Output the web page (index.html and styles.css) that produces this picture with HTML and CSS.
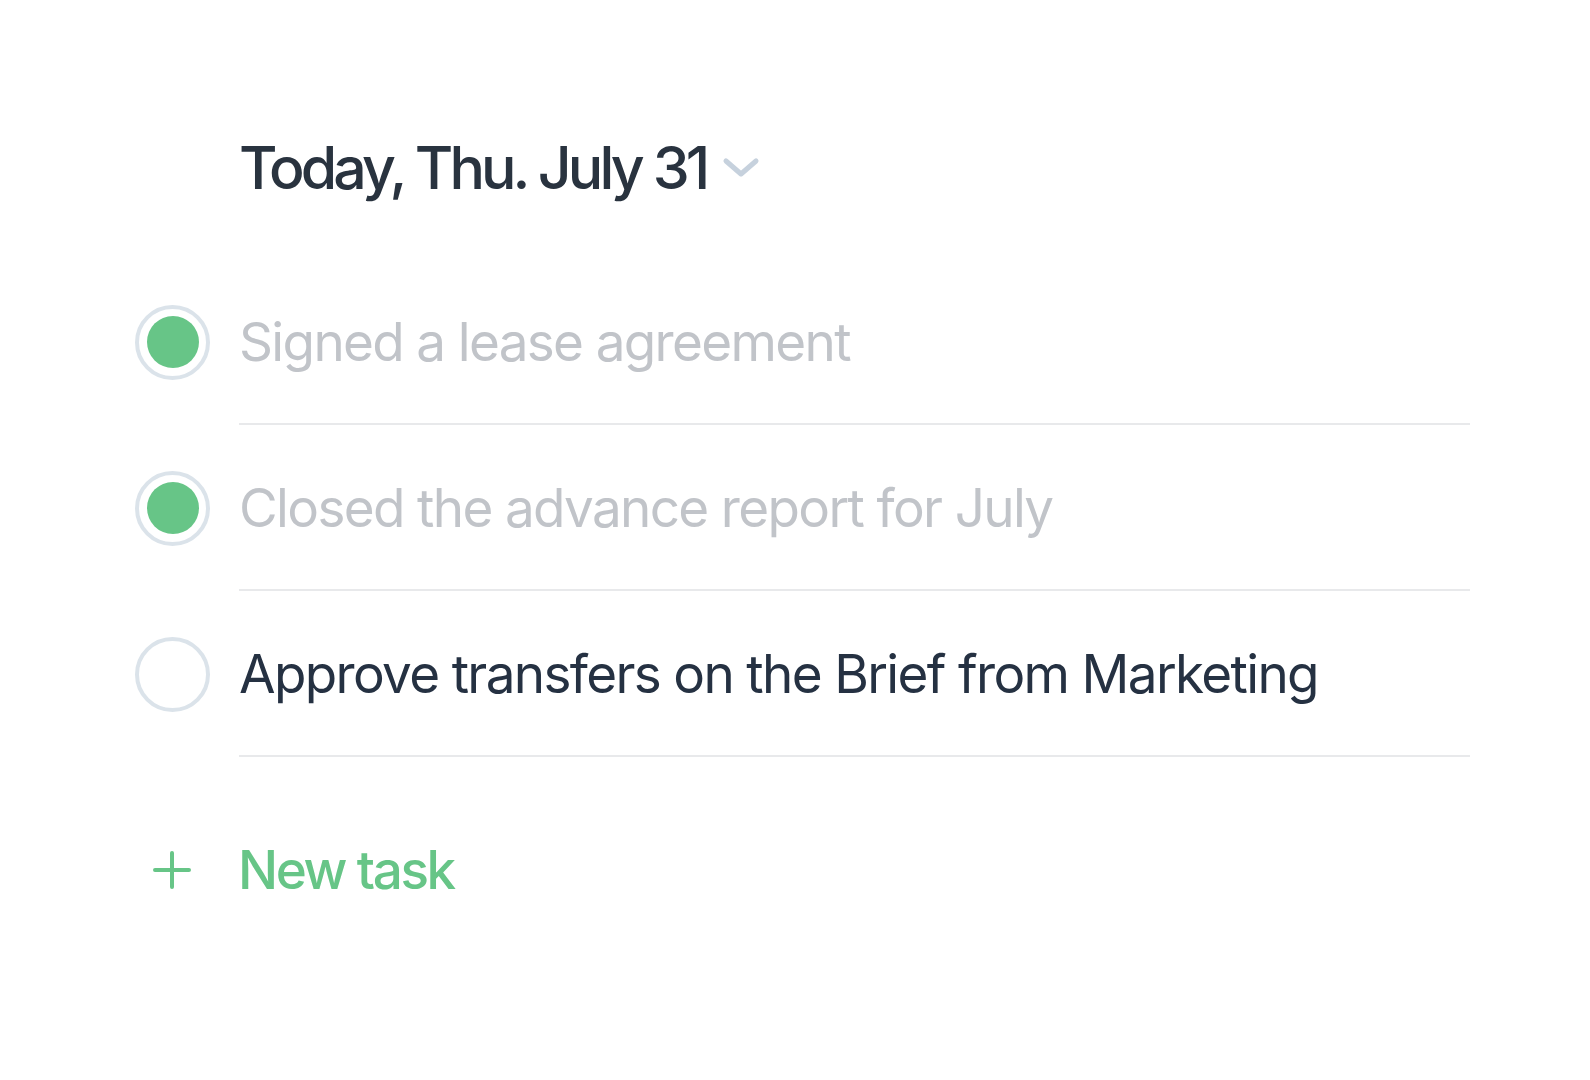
FILE: index.html
```html
<!DOCTYPE html>
<html lang="en">
<head>
<meta charset="utf-8">
<title>Today</title>
<link rel="stylesheet" href="styles.css">
</head>
<body>
<main class="page">
  <header class="header">
    <h1 class="title">Today, Thu. July 31</h1>
    <svg class="chevron" width="38" height="22" viewBox="0 0 38 22" aria-hidden="true">
      <path d="M4 4 L19 17 L34 4" fill="none" stroke="#c6d1dd" stroke-width="5" stroke-linecap="round" stroke-linejoin="round"/>
    </svg>
  </header>

  <ul class="tasks">
    <li class="task done">
      <span class="check"><span class="dot"></span></span>
      <span class="label">Signed a lease agreement</span>
    </li>
    <li class="task done">
      <span class="check"><span class="dot"></span></span>
      <span class="label">Closed the advance report for July</span>
    </li>
    <li class="task">
      <span class="check"></span>
      <span class="label">Approve transfers on the Brief from Marketing</span>
    </li>
  </ul>

  <div class="new-task">
    <svg class="plus" width="38" height="38" viewBox="0 0 38 38" aria-hidden="true">
      <path d="M19 2 V36 M2 19 H36" fill="none" stroke="#67c587" stroke-width="4" stroke-linecap="round"/>
    </svg>
    <span class="new-label">New task</span>
  </div>
</main>
</body>
</html>
```

FILE: styles.css
```css
* { box-sizing: border-box; }

html, body {
  margin: 0;
  padding: 0;
  background: #ffffff;
}

body {
  font-family: "Inter", "Noto Sans", "Liberation Sans", sans-serif;
  color: #263242;
}

.page {
  padding: 130px 0 0 135px;
}

.header {
  display: flex;
  align-items: center;
  margin-left: 104px;
  height: 76px;
}

.title {
  margin: 0;
  font-size: 59px;
  font-weight: 500;
  letter-spacing: -3.9px;
  color: #29333f;
  line-height: 76px;
}

.chevron {
  flex: none;
  margin-left: 16px;
}

.tasks {
  list-style: none;
  margin: 53px 0 0 0;
  padding: 0;
}

.task {
  display: flex;
  align-items: center;
}

.check {
  flex: none;
  width: 75px;
  height: 75px;
  border: 4px solid #dbe3ea;
  border-radius: 50%;
  display: flex;
  align-items: center;
  justify-content: center;
  margin-right: 29px;
}

.dot {
  width: 52px;
  height: 52px;
  border-radius: 50%;
  background: #67c587;
}

.label {
  width: 1231px;
  height: 166px;
  display: flex;
  align-items: center;
  border-bottom: 2px solid #e8e9eb;
  padding-top: 2px;
  font-size: 53px;
  font-weight: 400;
  letter-spacing: -1.65px;
  color: #253142;
}

.task.done .label {
  color: #c1c4c9;
}

.new-task {
  display: flex;
  align-items: center;
  height: 226px;
}

.plus {
  flex: none;
  margin-left: 18px;
  margin-right: 47px;
}

.new-label {
  font-size: 53px;
  font-weight: 500;
  color: #67c587;
  letter-spacing: -2.4px;
}
```
